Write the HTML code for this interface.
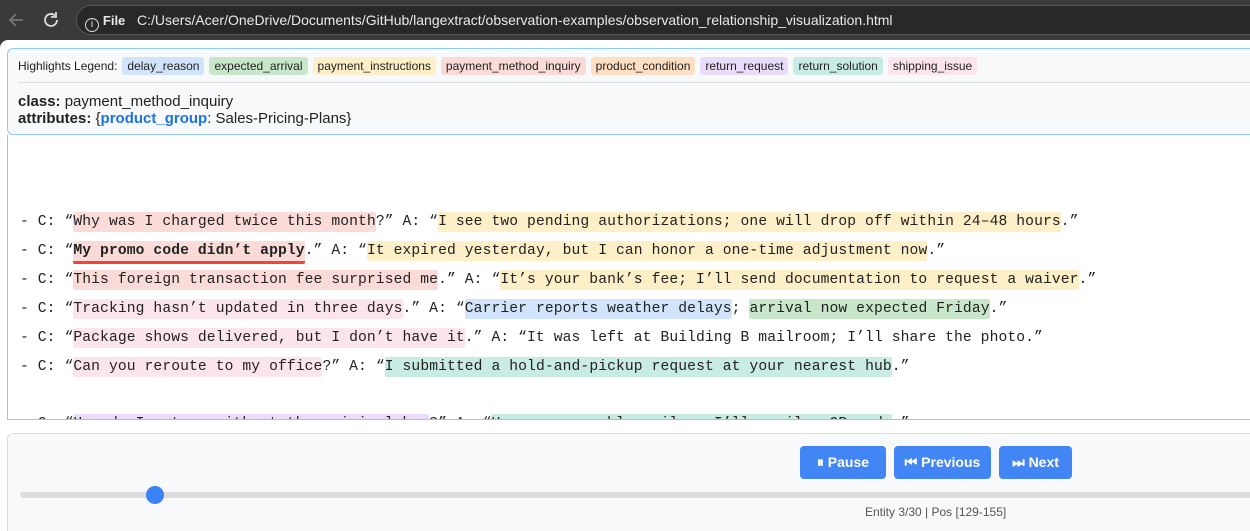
<!DOCTYPE html>
<html><head><meta charset="utf-8"><style>
*{box-sizing:border-box;margin:0;padding:0}
html,body{width:1250px;height:531px;overflow:hidden}
body{background:#3a3a3a;font-family:"Liberation Sans",Arial,sans-serif;position:relative}
.bar{position:absolute;left:0;top:0;width:1250px;height:40px;background:#3a3a3a}
.url{position:absolute;left:76px;top:5px;width:1200px;height:30px;border-radius:15px;background:#282828;border:1px solid #555;color:#e8e8e8;font-size:14px;line-height:28px;padding-left:8px}
.page{position:absolute;left:0;top:40px;width:1250px;height:491px;background:#fff;border-top-left-radius:8px;overflow:hidden}
.top{position:absolute;left:7px;top:8px;width:1260px;height:87px;background:#f8f9fa;border:1px solid #90caf9;border-radius:6px}
.leg{position:absolute;left:10px;top:8px;font-size:12px;color:#222;white-space:nowrap}
.leg span{display:inline-block;padding:2px 5px;border-radius:3px;margin-left:5px;line-height:14px}
.sep{position:absolute;left:10px;right:0;top:33px;border-top:1px solid #ddd}
.info{position:absolute;left:10px;top:44px;font-size:15px;line-height:17px;color:#222}
.txt{position:absolute;left:7px;top:95px;width:1260px;height:285px;border:1px solid #90caf9;border-top:none;overflow:hidden;background:#fff}
.lines{position:absolute;left:12px;top:73px;font-family:"Liberation Mono",monospace;font-size:14.67px;letter-spacing:0.1px;line-height:28.9px;white-space:pre;color:#222}
.lines span{padding:2px 0;border-radius:2px}
.pm{background:#fadbd8}.pi{background:#fdefc7}.dr{background:#d2e3fc}.ea{background:#c8e6c9}.rs{background:#c8ebe4}.rr{background:#e9dcfb}.si{background:#fce4ec}
.ctl{position:absolute;left:7px;top:393px;width:1260px;height:120px;background:#f8f9fa;border:1px solid #ddd;border-radius:6px}
.btn{position:absolute;top:12px;height:33px;background:#4285f4;color:#fff;font-size:14px;font-weight:bold;border-radius:4px;text-align:center;line-height:33px}
.track{position:absolute;left:12px;top:58px;width:1250px;height:6px;background:#ddd;border-radius:3px}
.thumb{position:absolute;left:138px;top:52px;width:18px;height:18px;border-radius:50%;background:#3b82f6}
.stat{position:absolute;left:857px;top:71px;font-size:12px;color:#555}
</style></head><body>
<div class="bar">
<svg style="position:absolute;left:6px;top:10px" width="20" height="20" viewBox="0 0 20 20"><path d="M17 10H4M10 4L4 10L10 16" stroke="#777" stroke-width="1.8" fill="none"/></svg>
<svg style="position:absolute;left:41px;top:10px" width="20" height="20" viewBox="0 0 20 20"><path d="M16 10a6 6 0 1 1-2-4.5" stroke="#ddd" stroke-width="1.8" fill="none"/><path d="M15 2v5h-5" stroke="#ddd" stroke-width="1.8" fill="none"/></svg>
<div class="url"><span style="display:inline-block;width:14px;height:14px;border:1.5px solid #ddd;border-radius:50%;font-size:10px;line-height:11px;text-align:center;vertical-align:-2px">i</span> <b style="font-size:13px">File</b>&nbsp;&nbsp; C:/Users/Acer/OneDrive/Documents/GitHub/langextract/observation-examples/observation_relationship_visualization.html</div>
</div>
<div class="page">
<div class="top">
<div class="leg">Highlights Legend:<span class="dr">delay_reason</span><span class="ea">expected_arrival</span><span class="pi">payment_instructions</span><span class="pm">payment_method_inquiry</span><span style="background:#ffdfc4">product_condition</span><span class="rr">return_request</span><span class="rs">return_solution</span><span class="si">shipping_issue</span></div>
<div class="sep"></div>
<div class="info"><b>class:</b> payment_method_inquiry<br><b>attributes:</b> {<b style="color:#1a73e8">product_group</b>: Sales-Pricing-Plans}</div>
</div>
<div class="txt"><div class="lines">- C: “<span class="pm">Why was I charged twice this month</span>?” A: “<span class="pi">I see two pending authorizations; one will drop off within 24–48 hours</span>.”
- C: “<span class="pm" style="font-weight:bold;border-bottom:3px solid #f44336">My promo code didn’t apply</span>.” A: “<span class="pi">It expired yesterday, but I can honor a one-time adjustment now</span>.”
- C: “<span class="pm">This foreign transaction fee surprised me</span>.” A: “<span class="pi">It’s your bank’s fee; I’ll send documentation to request a waiver</span>.”
- C: “<span class="si">Tracking hasn’t updated in three days</span>.” A: “<span class="dr">Carrier reports weather delays</span>; <span class="ea">arrival now expected Friday</span>.”
- C: “<span class="si">Package shows delivered, but I don’t have it</span>.” A: “It was left at Building B mailroom; I’ll share the photo.”
- C: “<span class="si">Can you reroute to my office</span>?” A: “<span class="rs">I submitted a hold-and-pickup request at your nearest hub</span>.”

- C: “<span class="rr">How do I return without the original box</span>?” A: “<span class="rs">Use our reusable mailer; I’ll email a QR code</span>.”</div></div>
<div class="ctl">
<div class="btn" style="left:792px;width:86px">⏸ Pause</div>
<div class="btn" style="left:886px;width:97px">⏮ Previous</div>
<div class="btn" style="left:991px;width:73px">⏭ Next</div>
<div class="track"></div><div class="thumb"></div>
<div class="stat">Entity 3/30 | Pos [129-155]</div>
</div>
</div>
</body></html>
